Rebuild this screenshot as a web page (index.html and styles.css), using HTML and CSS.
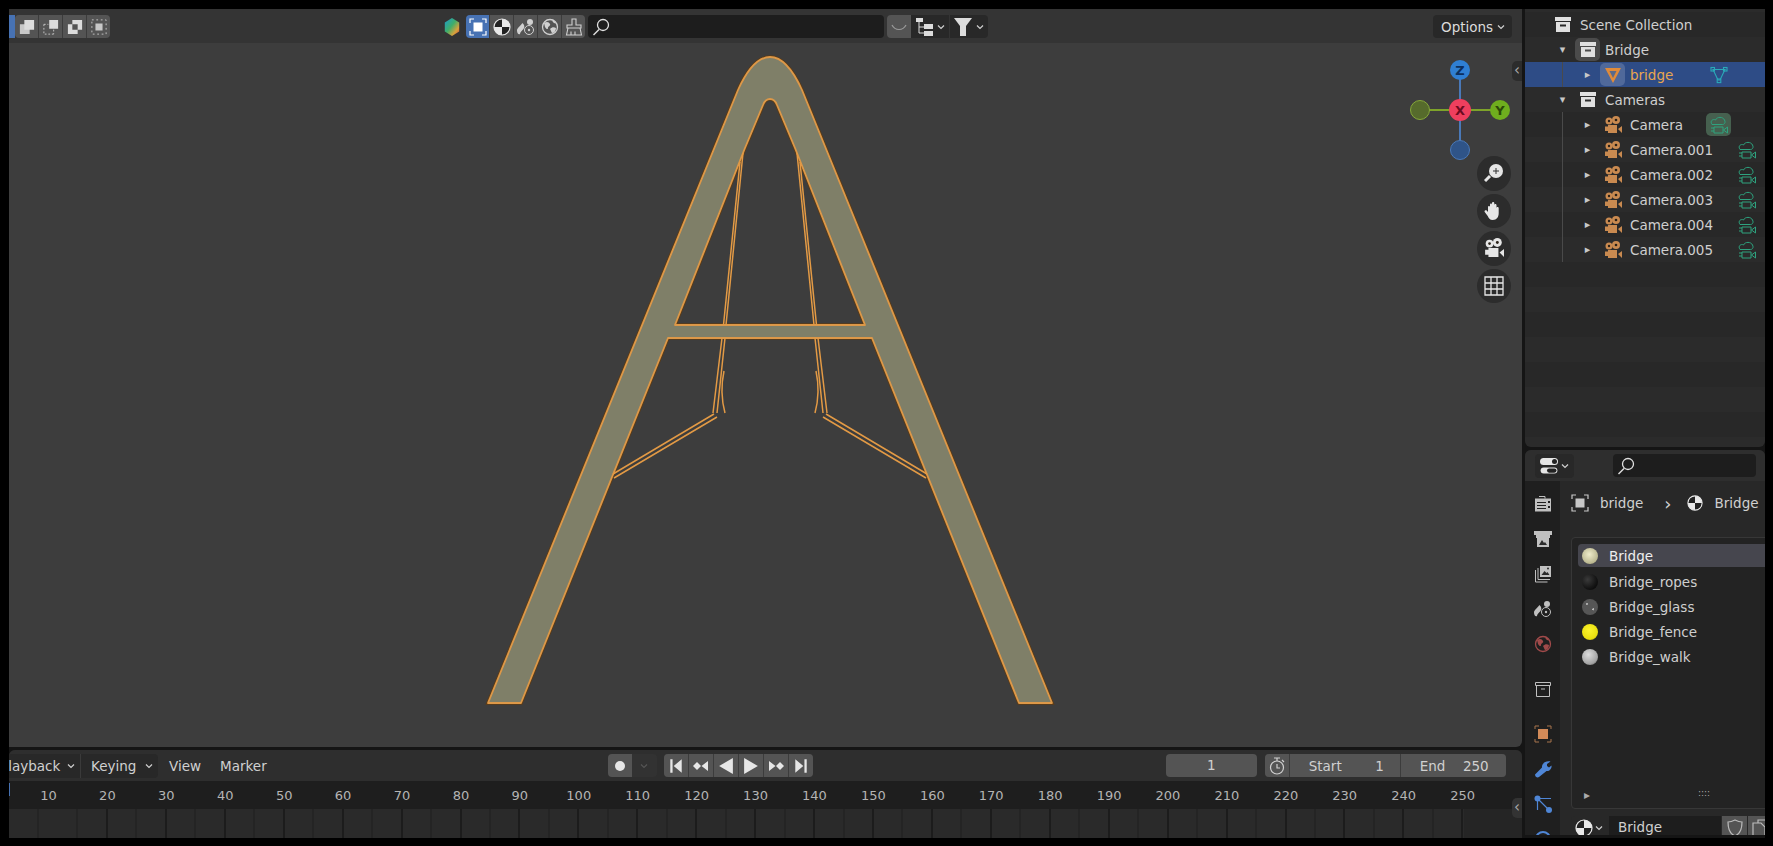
FILE: index.html
```html
<!DOCTYPE html>
<html lang="en">
<head>
    <meta charset="UTF-8">
    <title>Bridge - Blender</title>
    <link rel="stylesheet" href="styles.css">
</head>
<body>
    <!-- Icon sprite -->
    <svg class="sprite" xmlns="http://www.w3.org/2000/svg">
        <symbol id="i-chev" viewBox="0 0 8 8"><path d="M1 2.5 4 5.5 7 2.5" fill="none" stroke="currentColor" stroke-width="1.2"/></symbol>
        <symbol id="i-archive" viewBox="0 0 16 16"><path fill-rule="evenodd" d="M0 0h16v4H0zM1 5h14v10H1zM5 7.5v2h6v-2z" fill="currentColor"/></symbol>
        <symbol id="i-archive-line" viewBox="0 0 16 16"><path d="M.5.5h15v3H.5zM1.500 3.500h13v11h-13zM6 7h4" fill="none" stroke="currentColor" stroke-width="1"/></symbol>
        <symbol id="i-movie" viewBox="0 0 18 18"><circle cx="5" cy="5" r="3.500" fill="currentColor"/><circle cx="12" cy="4" r="4" fill="currentColor"/><circle cx="5" cy="5" r="1.200" fill="#2a2118"/><circle cx="12" cy="4" r="1.300" fill="#2a2118"/><path d="M1 10.500h3V9h9v8H4v-2H1zM14 13l4-3v7z" fill="currentColor"/></symbol>
        <symbol id="i-movie-line" viewBox="0 0 18 18"><g fill="none" stroke="currentColor" stroke-width="1"><path d="M2 8.500C-.5 5 3 2.500 5.500 4 7 .5 13 .5 14.500 4c1.500 3-.5 4.500-2 4.500z"/><path d="M4 11h9v6H4zM1 12h3M1 15h3M13.500 14l4-3v6z"/></g></symbol>
        <symbol id="i-tri" viewBox="0 0 18 18"><path d="M1 2h16L9 17z" fill="#e08b3a"/><path d="M5.500 5h7L9 12z" fill="#5a6a8a"/></symbol>
        <symbol id="i-mesh" viewBox="0 0 18 18"><g fill="none" stroke="currentColor" stroke-width="1.100"><path d="M3 3.500h12L10 14H8z"/><rect x="1" y="1.500" width="3.500" height="3.500"/><rect x="13.500" y="1.500" width="3.500" height="3.500"/><rect x="7.200" y="13" width="3.600" height="3.600"/></g></symbol>
        <symbol id="i-select" viewBox="0 0 18 18"><path d="M1 5V1h4M13 1h4v4M17 13v4h-4M5 17H1v-4" fill="none" stroke="currentColor" stroke-width="1.200"/><rect x="4.500" y="4.500" width="9" height="9" fill="currentColor"/></symbol>
        <symbol id="i-material" viewBox="0 0 18 18"><circle cx="9" cy="9" r="8" fill="#e8e8e8"/><path d="M9 1a8 8 0 0 0-8 8h8zM9 9h8a8 8 0 0 1-8 8z" fill="#222"/><circle cx="9" cy="9" r="8" fill="none" stroke="#e8e8e8" stroke-width="1.200"/></symbol>
        <symbol id="i-scene" viewBox="0 0 18 18"><path d="M5.500 5C7.500 7 8 9 6.500 11 5 13 3 14 3 16 1.500 17 0 15 0 12.500 0 10 3.500 8 5.500 5z" fill="currentColor"/><circle cx="13" cy="4" r="3" fill="currentColor"/><circle cx="12" cy="12" r="4.500" fill="none" stroke="currentColor" stroke-width="1"/><circle cx="12" cy="12" r="1.200" fill="currentColor"/></symbol>
        <symbol id="i-world" viewBox="0 0 18 18"><circle cx="9" cy="9" r="7.500" fill="none" stroke="currentColor" stroke-width="1.300"/><path d="M3 5c3-2 5-1 6 1 1 2-2 2-2 4s-2 1-3-1zM9 11c2-2 4-2 6-1 0 3-2 5-4 5-1-1-1-3-2-4zM11 2.500c2 0 3.500 1.500 4 3-2 0-3-1-4-3z" fill="currentColor"/></symbol>
        <symbol id="i-brush" viewBox="0 0 18 18"><path d="M7 1h4v6h5v3H2V7h5zM3 10 1.500 17h15L15 10M6 13.500V17M10 13.500V17" fill="none" stroke="currentColor" stroke-width="1.100"/></symbol>
        <symbol id="i-search" viewBox="0 0 18 18"><circle cx="11" cy="7" r="5.500" fill="none" stroke="currentColor" stroke-width="1.300"/><path d="M7 11.500 1.500 17" stroke="currentColor" stroke-width="1.500"/></symbol>
        <symbol id="i-render" viewBox="0 0 18 18"><path d="M5 1.500h6v2" fill="none" stroke="currentColor"/><path d="M1 3.500h16v13H1zM3 7v1h9V7zM3 10v1h9v-1zM3 13v1h9v-1zM14 6v2h2V6zM14 11v2h2v-2z" fill="currentColor" fill-rule="evenodd"/></symbol>
        <symbol id="i-output" viewBox="0 0 18 18"><path d="M0 1h18v4H0z" fill="currentColor"/><path d="M2 5h14v3h-1v9H3V8H2z" fill="currentColor"/><path d="M5 15l3-5 2 3 1-1 2 3z" fill="#2a2a2a"/></symbol>
        <symbol id="i-view" viewBox="0 0 18 18"><g fill="none" stroke="currentColor"><path d="M1.500 5v12h12M4 3v11.500h12"/></g><rect x="6" y="1" width="11" height="11" fill="currentColor"/><path d="M7.500 10l3-4 2 2 1-1 2 3z" fill="#2a2a2a"/><circle cx="14" cy="3.500" r="1" fill="#2a2a2a"/></symbol>
        <symbol id="i-wrench" viewBox="0 0 18 18"><path d="M16.500 1.500 13 4v2l2 1.500 2.500-2c.5 3-2 6-5 5.500L5 17c-1 1-4 .5-4-2.500l7-7C7.500 4 11 .5 16.500 1.500z" fill="currentColor"/></symbol>
        <symbol id="i-nodes" viewBox="0 0 18 18"><circle cx="3.500" cy="3.500" r="3" fill="currentColor"/><circle cx="15" cy="15" r="3" fill="currentColor"/><path d="M3.500 3.500H17M3.500 3.500V15M3.500 3.500 15 15" stroke="currentColor" stroke-width="1.200"/></symbol>
        <symbol id="i-shield" viewBox="0 0 18 18"><path d="M2 3c3 0 5-1 7-2 2 1 4 2 7 2 0 7-2 12-7 14C4 15 2 10 2 3z" fill="none" stroke="currentColor" stroke-width="1.200"/></symbol>
        <symbol id="i-copy" viewBox="0 0 18 18"><path d="M6 4V1h7l4 4v9h-4M1 4h8l4 4v9H1z" fill="none" stroke="currentColor" stroke-width="1.200"/></symbol>
        <symbol id="i-clock" viewBox="0 0 18 18"><circle cx="9" cy="10.500" r="6.500" fill="none" stroke="currentColor" stroke-width="1.200"/><path d="M6 1h6M9 1v3M9 7v4h3M14 3l2 2" fill="none" stroke="currentColor" stroke-width="1.200"/></symbol>
        <symbol id="i-tree" viewBox="0 0 18 18"><path d="M4 3v12h5M4 9h5" fill="none" stroke="currentColor"/><path d="M1 0h7v4H1zM9 6h9v5H9zM9 13h9v5H9z" fill="currentColor"/></symbol>
        <symbol id="i-funnel" viewBox="0 0 18 18"><path d="M0 0h18l-6 8v10H6V8z" fill="currentColor"/></symbol>
        <symbol id="i-toggle" viewBox="0 0 18 18"><rect x="0" y="1" width="18" height="7" rx="3.500" fill="currentColor"/><circle cx="14.500" cy="4.500" r="2.500" fill="#222"/><rect x=".6" y="10.600" width="16.800" height="6" rx="3" fill="currentColor"/><rect x="7" y="11.500" width="9.500" height="4.200" rx="2.100" fill="#222"/></symbol>
    </svg>

    <div class="app">
        <!-- 3D viewport -->
        <section class="viewport">
            <svg class="scene" viewBox="9 9 1513 738">
                <defs>
                    <g id="half">
                        <path class="cable" d="M740 162 723.500 325M743 153 726 325M722 338 713 413M725 338 717 413"/>
                        <path class="cable" d="M714 414 613 474M717 417 614 478"/>
                        <path class="cable" d="M724 371C721 385 721 398 725 413"/>
                    </g>
                </defs>
                <path class="bridge-halo" d="M488 703 738 90C748 68 758 57 770 57S792 68 802 90L1052 703H1019L872 338H668L521 703ZM675 325H865L795 148 777 105C774 97 766 97 763 105L745 148Z"/>
                <path class="bridge-body" fill-rule="evenodd" d="M488 703 738 90C748 68 758 57 770 57S792 68 802 90L1052 703H1019L872 338H668L521 703ZM675 325H865L795 148 777 105C774 97 766 97 763 105L745 148Z"/>
                <use href="#half"/>
                <use href="#half" transform="translate(1540 0) scale(-1 1)"/>
            </svg>

            <header class="bar view-head">
                <div class="mode-sliver"></div>
                <div class="group">
                    <button class="btn"><svg class="ic14" viewBox="0 0 18 18"><path d="M1 6h11v11H1z" fill="#c8c8c8"/><path d="M6 1h11v11H6z" fill="#dcdcdc"/></svg></button>
                    <button class="btn"><svg class="ic14" viewBox="0 0 18 18"><path d="M7 1h10v10H7z" fill="#dcdcdc"/><path d="M1 6v11h11" fill="none" stroke="#ccc" stroke-dasharray="2 2"/><path d="M1 6h5M12 12v5" stroke="#ccc" stroke-dasharray="2 2"/></svg></button>
                    <button class="btn"><svg class="ic14" viewBox="0 0 18 18"><path fill-rule="evenodd" d="M1 6h5V1h11v11h-5v5H1zM6 6v6h6V6z" fill="#dcdcdc"/></svg></button>
                    <button class="btn"><svg class="ic14" viewBox="0 0 18 18"><path d="M5 5h8v8H5z" fill="#c8c8c8"/><path d="M1 1h16v16H1z" fill="none" stroke="#ccc" stroke-dasharray="2 3"/></svg></button>
                </div>

                <div class="tool-slot">
                    <svg class="ic18" viewBox="0 0 18 20">
                        <defs><linearGradient id="hex" x1="0" y1="0" x2="1" y2="1"><stop offset="0" stop-color="#1c9ad0"/><stop offset=".45" stop-color="#3fae6a"/><stop offset=".75" stop-color="#d8a23c"/><stop offset="1" stop-color="#d5473c"/></linearGradient></defs>
                        <path d="M9 0 17 5v10l-8 5-8-5V5z" fill="url(#hex)"/>
                    </svg>
                </div>
                <div class="group">
                    <button class="btn on"><svg class="ic18"><use href="#i-select"/></svg></button>
                    <button class="btn"><svg class="ic18"><use href="#i-material"/></svg></button>
                    <button class="btn"><svg class="ic18"><use href="#i-scene"/></svg></button>
                    <button class="btn"><svg class="ic18"><use href="#i-world"/></svg></button>
                    <button class="btn"><svg class="ic18"><use href="#i-brush"/></svg></button>
                </div>
                <div class="search wide"><svg class="ic18"><use href="#i-search"/></svg></div>
                <button class="btn lone"><svg viewBox="0 0 18 18" class="ic18"><path d="M2 7c3 6 11 6 14 0" fill="none" stroke="#9a9a9a" stroke-width="1.200"/></svg></button>
                <div class="dark-menu first"><svg class="ic18"><use href="#i-tree"/></svg><svg class="chev"><use href="#i-chev"/></svg></div>
                <div class="dark-menu"><svg class="ic20"><use href="#i-funnel"/></svg><svg class="chev"><use href="#i-chev"/></svg></div>
                <div class="dark-menu options">Options<svg class="chev"><use href="#i-chev"/></svg></div>
            </header>

            <!-- Navigation gizmo -->
            <svg class="gizmo" viewBox="0 0 110 110">
                <path d="M50 15V95" stroke="#4a79b8" stroke-width="2"/>
                <path d="M10 55H90" stroke="#7ea32a" stroke-width="2"/>
                <circle cx="50" cy="15" r="10" fill="#2f7fd3"/>
                <text x="50" y="20" class="axis" fill="#0c2f5e">Z</text>
                <circle cx="10" cy="55" r="9.500" fill="#566b2c" stroke="#86a83a" stroke-width="1"/>
                <circle cx="90" cy="55" r="10" fill="#6fae1e"/>
                <text x="90" y="60" class="axis" fill="#2c4a08">Y</text>
                <circle cx="50" cy="95" r="9.500" fill="#2f5488" stroke="#4a79b8" stroke-width="1"/>
                <circle cx="50" cy="55" r="11" fill="#ee3f5e"/>
                <text x="50" y="60" class="axis" fill="#6d0a20">X</text>
            </svg>
            <div class="nav-tools">
                <button class="round"><svg viewBox="0 0 20 20" class="ic20"><circle cx="12" cy="8" r="7" fill="#e6e6e6"/><path d="M6 13 1 18" stroke="#e6e6e6" stroke-width="3"/><path d="M9 8h6M12 5v6" stroke="#333" stroke-width="1"/></svg></button>
                <button class="round"><svg viewBox="0 0 20 20" class="ic20"><path d="M4 11V6c0-1.500 2-1.500 2 0V3.500c0-1.500 2-1.500 2 0V2c0-1.500 2.300-1.500 2.300 0v2c0-1.500 2.200-1.500 2.200 0v3c0-1.500 2.200-1.500 2.200 0v5c0 4-2 7-6 7-3 0-4-2-5-4l-3-4c-.8-1.300 1-2.500 2-1.500z" fill="#e6e6e6"/></svg></button>
                <button class="round"><svg class="ic20"><use href="#i-movie"/></svg></button>
                <button class="round"><svg viewBox="0 0 20 20" class="ic20"><path d="M1 1h18v18H1zM7 1v18M13 1v18M1 7h18M1 13h18" fill="none" stroke="#e6e6e6" stroke-width="1.300"/></svg></button>
            </div>
            <span class="region-tab view-tab">&#8249;</span>
        </section>

        <!-- Outliner -->
        <section class="outliner">
            <div class="row lv0"><span class="tw"></span><span class="ico"><svg class="ic16"><use href="#i-archive"/></svg></span><span class="name">Scene Collection</span></div>
            <div class="row lv1"><span class="tw">&#9662;</span><span class="ico boxed"><svg class="ic16"><use href="#i-archive"/></svg></span><span class="name">Bridge</span></div>
            <div class="row lv2 selected"><span class="tw">&#9656;</span><span class="ico boxed blue"><svg class="ic18"><use href="#i-tri"/></svg></span><span class="name active">bridge</span><span class="data first teal"><svg class="ic18"><use href="#i-mesh"/></svg></span></div>
            <div class="row lv1"><span class="tw">&#9662;</span><span class="ico"><svg class="ic16"><use href="#i-archive"/></svg></span><span class="name">Cameras</span></div>
            <div class="cam-list">
                <div class="row lv2"><span class="tw">&#9656;</span><span class="ico cam"><svg class="ic18"><use href="#i-movie"/></svg></span><span class="name">Camera</span><span class="data first boxed green"><svg class="ic18"><use href="#i-movie-line"/></svg></span></div>
                <div class="row lv2"><span class="tw">&#9656;</span><span class="ico cam"><svg class="ic18"><use href="#i-movie"/></svg></span><span class="name">Camera.001</span><span class="data green"><svg class="ic18"><use href="#i-movie-line"/></svg></span></div>
                <div class="row lv2"><span class="tw">&#9656;</span><span class="ico cam"><svg class="ic18"><use href="#i-movie"/></svg></span><span class="name">Camera.002</span><span class="data green"><svg class="ic18"><use href="#i-movie-line"/></svg></span></div>
                <div class="row lv2"><span class="tw">&#9656;</span><span class="ico cam"><svg class="ic18"><use href="#i-movie"/></svg></span><span class="name">Camera.003</span><span class="data green"><svg class="ic18"><use href="#i-movie-line"/></svg></span></div>
                <div class="row lv2"><span class="tw">&#9656;</span><span class="ico cam"><svg class="ic18"><use href="#i-movie"/></svg></span><span class="name">Camera.004</span><span class="data green"><svg class="ic18"><use href="#i-movie-line"/></svg></span></div>
                <div class="row lv2"><span class="tw">&#9656;</span><span class="ico cam"><svg class="ic18"><use href="#i-movie"/></svg></span><span class="name">Camera.005</span><span class="data green"><svg class="ic18"><use href="#i-movie-line"/></svg></span></div>
            </div>
        </section>

        <!-- Timeline -->
        <section class="timeline">
            <header class="bar tl-head">
                <div class="tl-menu playback">Playback<svg class="chev"><use href="#i-chev"/></svg></div>
                <div class="tl-menu keying">Keying<svg class="chev"><use href="#i-chev"/></svg></div>
                <span class="tl-link view-link">View</span>
                <span class="tl-link">Marker</span>
                <div class="record">
                    <button class="btn rec"><svg class="ic10" viewBox="0 0 10 10"><circle cx="5" cy="5" r="5" fill="#e6e6e6"/></svg></button>
                    <span class="rec-drop"><svg class="chev dim"><use href="#i-chev"/></svg></span>
                </div>
                <div class="group transport">
                    <button class="btn"><svg class="ic14" viewBox="0 0 14 14"><path d="M2 1h2v12H2zM12 1v12L5 7z" fill="#e6e6e6"/></svg></button>
                    <button class="btn"><svg class="ic14" viewBox="0 0 16 14"><path d="M4 3l4 4-4 4-4-4zM8.500 7 15 2v10z" fill="#e6e6e6"/></svg></button>
                    <button class="btn"><svg class="ic14" viewBox="0 0 14 14"><path d="M13 0v14L1 7z" fill="#e6e6e6"/></svg></button>
                    <button class="btn"><svg class="ic14" viewBox="0 0 14 14"><path d="M1 0v14L13 7z" fill="#e6e6e6"/></svg></button>
                    <button class="btn"><svg class="ic14" viewBox="0 0 16 14"><path d="M12 3 16 7l-4 4-4-4zM7.500 7 1 2v10z" fill="#e6e6e6"/></svg></button>
                    <button class="btn"><svg class="ic14" viewBox="0 0 14 14"><path d="M12 1h-2v12h2zM2 1v12l7-6z" fill="#e6e6e6"/></svg></button>
                </div>
                <div class="field current">1</div>
                <div class="group range">
                    <button class="btn clock"><svg class="ic18"><use href="#i-clock"/></svg></button>
                    <div class="num start"><span>Start</span><span>1</span></div>
                    <div class="num end"><span>End</span><span>250</span></div>
                </div>
            </header>
            <div class="ruler">
                <span>10</span><span>20</span><span>30</span><span>40</span><span>50</span><span>60</span><span>70</span><span>80</span><span>90</span><span>100</span><span>110</span><span>120</span><span>130</span><span>140</span><span>150</span><span>160</span><span>170</span><span>180</span><span>190</span><span>200</span><span>210</span><span>220</span><span>230</span><span>240</span><span>250</span>
            </div>
            <div class="tracks"></div>
            <span class="region-tab tl-tab">&#8249;</span>
        </section>

        <!-- Properties -->
        <section class="props">
            <header class="props-head">
                <div class="type-btn"><svg class="ic18"><use href="#i-toggle"/></svg><svg class="chev"><use href="#i-chev"/></svg></div>
                <div class="search small"><svg class="ic18"><use href="#i-search"/></svg></div>
            </header>
            <div class="props-body">
                <nav class="tabs">
                    <span class="tab"><svg class="ic18"><use href="#i-render"/></svg></span>
                    <span class="tab"><svg class="ic18"><use href="#i-output"/></svg></span>
                    <span class="tab"><svg class="ic18"><use href="#i-view"/></svg></span>
                    <span class="tab"><svg class="ic18"><use href="#i-scene"/></svg></span>
                    <span class="tab red"><svg class="ic18"><use href="#i-world"/></svg></span>
                    <span class="tab sep1"><svg class="ic16"><use href="#i-archive-line"/></svg></span>
                    <span class="tab sep2"><svg class="ic18" viewBox="0 0 18 18"><path d="M4 4h10v10H4z" fill="#d28a58"/><path d="M1 4V1h4M13 1h4v3M17 14v3h-4M5 17H1v-3" fill="none" stroke="#a8744c"/></svg></span>
                    <span class="tab blue-tab"><svg class="ic18"><use href="#i-wrench"/></svg></span>
                    <span class="tab blue-tab"><svg class="ic18"><use href="#i-nodes"/></svg></span>
                    <span class="tab blue-tab"><svg class="ic18" viewBox="0 0 18 18"><circle cx="9" cy="9" r="7" fill="none" stroke="currentColor" stroke-width="2"/><circle cx="9" cy="9" r="3" fill="currentColor"/></svg></span>
                </nav>
                <div class="panel">
                    <div class="crumbs">
                        <svg class="ic18 crumb-ic"><use href="#i-select"/></svg>
                        <span class="crumb-name">bridge</span>
                        <span class="crumb-sep">&#8250;</span>
                        <svg class="ic16"><use href="#i-material"/></svg>
                        <span class="crumb-name">Bridge</span>
                    </div>
                    <div class="slots">
                        <div class="slot active-slot"><i class="ball pale"></i>Bridge</div>
                        <div class="slot"><i class="ball ropes"></i>Bridge_ropes</div>
                        <div class="slot"><i class="ball glass"></i>Bridge_glass</div>
                        <div class="slot"><i class="ball fence"></i>Bridge_fence</div>
                        <div class="slot"><i class="ball walk"></i>Bridge_walk</div>
                        <div class="slots-foot"><span class="foot-arrow">&#9656;</span><span class="grip">::::</span></div>
                    </div>
                    <div class="mat-row">
                        <div class="mat-browse"><svg class="ic18"><use href="#i-material"/></svg><svg class="chev"><use href="#i-chev"/></svg></div>
                        <div class="mat-name">Bridge</div>
                        <div class="mat-btn"><svg class="ic18"><use href="#i-shield"/></svg></div>
                        <div class="mat-btn"><svg class="ic18"><use href="#i-copy"/></svg></div>
                    </div>
                </div>
            </div>
        </section>
    </div>
</body>
</html>
```

FILE: styles.css
```css
* {
    box-sizing: border-box;
}
html, body {
    margin: 0;
    height: 100%;
}
body {
    background: #000;
    color: #d0d0d0;
    font-family: "DejaVu Sans", sans-serif;
    font-size: 13.5px;
    padding: 9px 8px 8px 9px;
    overflow: hidden;
}
button {
    border: none;
    padding: 0;
    margin: 0;
    color: inherit;
    font: inherit;
}
svg {
    display: block;
}
.sprite {
    position: absolute;
    width: 0;
    height: 0;
}
.ic10 { width: 10px; height: 10px; }
.ic14 { width: 16px; height: 16px; }
.ic16 { width: 16px; height: 16px; }
.ic18 { width: 18px; height: 18px; }
.ic20 { width: 20px; height: 20px; }
.chev {
    width: 8px;
    height: 8px;
    color: #d0d0d0;
    flex: none;
}
.app {
    display: grid;
    grid-template-columns: 1513px 240px;
    grid-template-rows: 438px 300px 88px;
    gap: 0 3px;
    height: 829px;
    background: #151515;
}

/* viewport */
.viewport {
    grid-column: 1;
    grid-row: 1 / 3;
    position: relative;
    background: #3d3d3d;
    border-radius: 0 0 6px 0;
    overflow: hidden;
}
.scene {
    position: absolute;
    top: 0;
    left: 0;
    width: 1513px;
    height: 738px;
}
.bridge-halo {
    fill: none;
    stroke: #5d3c16;
    stroke-width: 3.5;
}
.bridge-body {
    fill: #7f7f68;
    stroke: #dd9848;
    stroke-width: 1.8;
    stroke-linejoin: round;
}
.cable {
    fill: none;
    stroke: #e39a45;
    stroke-width: 1.5;
    paint-order: stroke;
}
.bar {
    display: flex;
    align-items: center;
    position: relative;
}
.view-head {
    height: 34px;
    padding-top: 1px;
    background: #343434;
}
.mode-sliver {
    width: 6px;
    height: 23px;
    background: #4772b3;
}
.group {
    display: flex;
    height: 23px;
    border-radius: 4px;
    overflow: hidden;
    gap: 1px;
    background: #3c3c3c;
}
.btn {
    display: flex;
    align-items: center;
    justify-content: center;
    width: 23px;
    height: 23px;
    background: #545454;
}
.btn.on {
    background: #4772b3;
    color: #fff;
}
.tool-slot {
    width: 24px;
    margin-left: 330px;
    margin-right: 2px;
    display: flex;
    justify-content: center;
}
.search {
    display: flex;
    align-items: center;
    background: #1d1d1d;
    border-radius: 4px;
    height: 23px;
    padding-left: 4px;
    color: #e0e0e0;
}
.search.wide {
    width: 296px;
    margin-left: 3px;
}
.lone {
    margin-left: 3px;
    border-radius: 4px 0 0 4px;
    width: 24px;
}
.dark-menu {
    display: flex;
    align-items: center;
    gap: 4px;
    height: 23px;
    padding: 0 4px;
    background: #282828;
    margin-left: 1px;
    border-radius: 0 4px 4px 0;
    width: 38px;
    color: #dcdcdc;
}
.dark-menu.first {
    margin-left: 0;
    border-radius: 0;
}
.dark-menu.options {
    width: 79px;
    margin-left: auto;
    margin-right: 10px;
    padding: 0 8px;
    justify-content: space-between;
    border-radius: 4px;
}
.gizmo {
    position: absolute;
    top: 46px;
    left: 1401px;
    width: 110px;
    height: 110px;
}
.axis {
    font: bold 13px "DejaVu Sans", sans-serif;
    text-anchor: middle;
}
.nav-tools {
    position: absolute;
    top: 147px;
    left: 1468px;
    display: flex;
    flex-direction: column;
    gap: 3px;
}
.round {
    display: flex;
    align-items: center;
    justify-content: center;
    width: 34px;
    height: 34.500px;
    border-radius: 50%;
    background: #2c2c2c;
    color: #e6e6e6;
}
.region-tab {
    position: absolute;
    width: 10px;
    height: 20px;
    background: #2c2c2c;
    border-radius: 5px 0 0 5px;
    color: #aaa;
    font-size: 15px;
    line-height: 18px;
    text-align: center;
}
.view-tab {
    top: 52px;
    right: 0;
}

/* outliner */
.outliner {
    grid-column: 2;
    grid-row: 1;
    padding-top: 3px;
    background: repeating-linear-gradient(#282828 3px, #282828 28px, #2b2b2b 28px, #2b2b2b 53px);
    border-radius: 0 0 6px 6px;
    overflow: hidden;
}
.row {
    display: flex;
    align-items: center;
    height: 25px;
    color: #cfcfcf;
    position: relative;
}
.row .tw {
    width: 25px;
    text-align: center;
    font-size: 11px;
    color: #c8c8c8;
    flex: none;
}
.row .ico {
    display: flex;
    align-items: center;
    justify-content: center;
    width: 25px;
    height: 23px;
    flex: none;
    color: #e0e0e0;
}
.lv0 { padding-left: 25px; }
.lv0 .name { margin-left: 5px; }
.lv0 .tw { display: none; }
.lv0 .ico { margin-left: 0; }
.lv1 { padding-left: 25px; }
.lv1 .name { margin-left: 5px; }
.lv2 { padding-left: 50px; }
.lv2 .name { margin-left: 5px; }
.row .boxed {
    background: #4b4b4b;
    border-radius: 5px;
}
.row .boxed.blue {
    background: #50699a;
}
.row .cam {
    color: #c98a50;
}
.selected {
    background: #2e4c86;
}
.selected::before,
.cam-list::before {
    content: "";
    position: absolute;
    left: 37px;
    top: 0;
    bottom: 0;
    width: 1px;
    background: #4a4a4a;
}
.name.active {
    color: #e8a64f;
}
.data {
    display: flex;
    align-items: center;
    justify-content: center;
    position: absolute;
    left: 209px;
    width: 25px;
    height: 23px;
}
.data.first {
    left: 181px;
}
.data.boxed {
    background: #46604f;
    border-radius: 5px;
}
.teal { color: #2aa9b8; }
.green { color: #2ea37f; }
.cam-list {
    position: relative;
}
.cam-list .data.first {
    left: 181px;
}

/* timeline */
.timeline {
    grid-column: 1;
    grid-row: 3;
    margin-top: 3px;
    height: 88px;
    display: flex;
    flex-direction: column;
    position: relative;
    background: #252525;
    border-radius: 6px 6px 0 0;
    overflow: hidden;
}
.tl-head {
    height: 31px;
    flex: none;
    background: #2e2e2e;
}
.tl-menu {
    display: flex;
    align-items: center;
    justify-content: space-between;
    height: 24px;
    padding: 0 5px;
    background: #282828;
}
.playback {
    width: 81px;
    margin-left: -9px;
    border-right: 1px solid #3a3a3a;
}
.playback {
    padding-left: 0;
}
.keying {
    width: 77px;
    padding-left: 10px;
    border-radius: 0 4px 4px 0;
}
.tl-link {
    margin-left: 11px;
    color: #d0d0d0;
}
.view-link {
    margin-left: 11px;
}
.tl-link + .tl-link {
    margin-left: 19px;
}
.record {
    display: flex;
    margin-left: 341px;
    border-radius: 4px;
    overflow: hidden;
}
.rec {
    width: 24px;
}
.rec-drop {
    display: flex;
    align-items: center;
    justify-content: center;
    width: 25px;
    background: #323232;
}
.chev.dim {
    color: #555;
}
.transport {
    margin-left: 7px;
}
.transport .btn {
    width: 24px;
}
.field {
    height: 23px;
    line-height: 23px;
    text-align: center;
    background: #545454;
    border-radius: 4px;
}
.current {
    width: 91px;
    margin-left: 353px;
}
.range {
    margin-left: 8px;
    width: 241px;
}
.clock {
    width: 24px;
    flex: none;
}
.num {
    display: flex;
    justify-content: space-between;
    align-items: center;
    background: #545454;
    height: 23px;
}
.start {
    width: 110px;
    padding: 0 16px 0 19px;
}
.end {
    width: 105px;
    padding: 0 17px 0 19px;
}
.ruler {
    display: flex;
    height: 28px;
    flex: none;
    align-items: center;
    padding-left: 10px;
    background: #1e1e1e;
    color: #b4b4b4;
    font-size: 13px;
    position: relative;
}
.ruler::before {
    content: "";
    position: absolute;
    left: 0;
    top: 2px;
    width: 1px;
    height: 13px;
    background: #4772b3;
}
.ruler span {
    flex: 0 0 58.930px;
    text-align: center;
}
.tracks {
    flex: 1;
    background:
        linear-gradient(90deg, transparent 1455px, #252525 1455px),
        repeating-linear-gradient(90deg, transparent 0, transparent 57.930px, #141414 57.930px, #141414 58.930px),
        repeating-linear-gradient(90deg, transparent 0, transparent 28.465px, #1f1f1f 28.465px, #1f1f1f 29.465px),
        #2a2a2a;
    background-position: 0 0, 39.500px 0, 39.500px 0, 0 0;
}
.tl-tab {
    right: 0;
    top: 48px;
    background: #333;
}

/* properties */
.props {
    grid-column: 2;
    grid-row: 2 / 4;
    margin-top: 3px;
    display: flex;
    flex-direction: column;
    background: #282828;
    border-radius: 6px 6px 0 0;
    overflow: hidden;
}
.props-head {
    display: flex;
    align-items: center;
    height: 31px;
    flex: none;
    background: #2e2e2e;
}
.type-btn {
    display: flex;
    align-items: center;
    gap: 3px;
    width: 39px;
    height: 24px;
    margin-left: 10px;
    padding-left: 5px;
    background: #282828;
    border-radius: 4px;
    color: #e6e6e6;
}
.search.small {
    width: 143px;
    margin-left: 39px;
}
.props-body {
    display: flex;
    flex: 1;
    min-height: 0;
}
.tabs {
    display: flex;
    flex-direction: column;
    align-items: center;
    flex: none;
    width: 35px;
    padding-top: 5px;
    background: #1f1f1f;
    overflow: hidden;
}
.tab {
    display: flex;
    align-items: center;
    justify-content: center;
    flex: none;
    height: 35px;
    color: #c0c0c0;
}
.tab.red { color: #a04a4a; }
.tab.sep1 { margin-top: 11px; }
.tab.sep2 { margin-top: 9px; }
.tab.blue-tab { color: #4f86d6; }
.panel {
    width: 205px;
    padding-left: 11px;
    overflow: hidden;
}
.crumbs {
    display: flex;
    align-items: center;
    height: 44px;
    color: #d0d0d0;
}
.crumb-ic {
    margin-right: 11px;
    color: #c8c8c8;
}
.crumb-name + .crumb-sep {
    margin: 0 15px 0 21px;
    font-size: 18px;
}
.crumb-name:last-child {
    margin-left: 12px;
}
.crumbs .ic16 {
    flex: none;
}
.slots {
    width: 210px;
    height: 272px;
    margin-top: 12px;
    padding: 6px 0 0 6px;
    position: relative;
    background: #232323;
    border: 1px solid #373737;
    border-radius: 4px;
}
.slot {
    display: flex;
    align-items: center;
    gap: 11px;
    height: 25px;
    padding-left: 4px;
    color: #cfcfcf;
    border-radius: 4px 0 0 4px;
}
.active-slot {
    height: 23px;
    margin-bottom: 2px;
    background: #46464e;
    color: #eee;
}
.ball {
    width: 16px;
    height: 16px;
    border-radius: 50%;
    flex: none;
}
.pale { background: radial-gradient(circle at 45% 40%, #efeccb, #b9b68f 70%, #55543f); }
.ropes { background: radial-gradient(circle at 35% 35%, #3a3a3a, #141414 60%, #000); }
.glass { background: radial-gradient(circle at 30% 30%, #aaa 6%, transparent 8%), radial-gradient(circle at 70% 65%, #bbb 6%, transparent 8%), #565656; }
.fence { background: radial-gradient(circle at 45% 40%, #fbf32c, #eadf10 65%, #7c7605); }
.walk { background: radial-gradient(circle at 40% 35%, #dcdcdc, #a4a4a4 65%, #505050); }
.slots-foot {
    position: absolute;
    left: 0;
    bottom: 0;
    width: 100%;
    height: 22px;
    color: #aaa;
    font-size: 12px;
}
.foot-arrow {
    position: absolute;
    left: 12px;
    top: 2px;
}
.grip {
    position: absolute;
    left: 126px;
    top: 2px;
    font-size: 9px;
    letter-spacing: 0;
}
.mat-row {
    display: flex;
    align-items: center;
    width: 240px;
    height: 23px;
    margin-top: 7px;
}
.mat-browse {
    display: flex;
    align-items: center;
    gap: 2px;
    width: 38px;
    height: 23px;
    padding-left: 4px;
    background: #282828;
    border-radius: 4px 0 0 4px;
}
.mat-name {
    width: 112px;
    height: 23px;
    line-height: 23px;
    padding-left: 9px;
    background: #1d1d1d;
}
.mat-btn {
    display: flex;
    align-items: center;
    justify-content: center;
    flex: none;
    width: 25px;
    height: 23px;
    margin-left: 1px;
    background: #545454;
    color: #bbb;
}
```
